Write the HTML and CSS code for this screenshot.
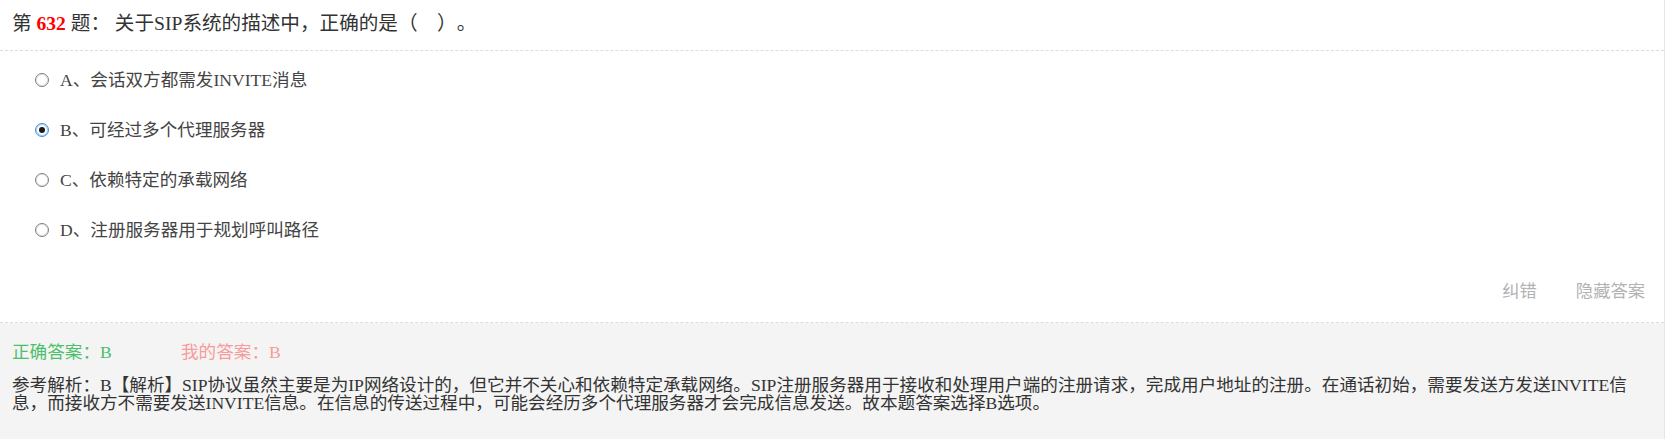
FILE: index.html
```html
<!DOCTYPE html>
<html lang="zh-CN">
<head>
<meta charset="utf-8">
<title>第632题</title>
<link rel="stylesheet" href="styles.css">
</head>
<body>
<div class="wrap">
  <div class="title">第 <span class="num">632</span> 题：&nbsp;关于SIP系统的描述中，正确的是（&nbsp;&nbsp;&nbsp;&nbsp;）。</div>
  <ul class="options">
    <li class="option"><span class="radio"></span><span class="opt-text">A、会话双方都需发INVITE消息</span></li>
    <li class="option"><span class="radio checked"></span><span class="opt-text">B、可经过多个代理服务器</span></li>
    <li class="option"><span class="radio"></span><span class="opt-text">C、依赖特定的承载网络</span></li>
    <li class="option"><span class="radio"></span><span class="opt-text">D、注册服务器用于规划呼叫路径</span></li>
  </ul>
  <div class="actions">
    <span class="action">纠错</span>
    <span class="action">隐藏答案</span>
  </div>
  <div class="answer">
    <div class="answer-row">
      <span class="right-ans">正确答案：B</span>
      <span class="my-ans">我的答案：B</span>
    </div>
    <div class="analysis">参考解析：B【解析】SIP协议虽然主要是为IP网络设计的，但它并不关心和依赖特定承载网络。SIP注册服务器用于接收和处理用户端的注册请求，完成用户地址的注册。在通话初始，需要发送方发送INVITE信息，而接收方不需要发送INVITE信息。在信息的传送过程中，可能会经历多个代理服务器才会完成信息发送。故本题答案选择B选项。</div>
  </div>
</div>
</body>
</html>
```

FILE: styles.css
```css
html, body {
  margin: 0;
  padding: 0;
  background: #ffffff;
}

body {
  font-family: "Liberation Serif", "Noto Sans CJK SC", serif;
  color: #333333;
}

.wrap {
  width: 1664px;
  min-height: 439px;
  border-right: 1px solid #e6e6e6;
  display: flex;
  flex-direction: column;
}

.title {
  height: 50px;
  line-height: 48px;
  padding: 0 12px;
  font-size: 19.6px;
  color: #333333;
  border-bottom: 1px dashed #dcdcdc;
  white-space: nowrap;
  text-spacing-trim: space-all;
}

.num {
  color: #ff0000;
  font-weight: bold;
}

.options {
  list-style: none;
  margin: 0;
  padding: 4px 0 0 35px;
}

.option {
  height: 50px;
  display: flex;
  align-items: center;
  font-size: 17.6px;
  color: #444444;
}

.radio {
  width: 12px;
  height: 12px;
  border: 1px solid #7d7d7d;
  border-radius: 50%;
  background: #ffffff;
  box-shadow: inset 0 0 0 1px #e4e4e4;
  margin-right: 11px;
  display: flex;
  align-items: center;
  justify-content: center;
  flex: none;
}

.radio.checked {
  border-color: #3c8fe0;
  box-shadow: inset 0 0 0 1px #a9cff5;
}

.radio.checked::after {
  content: "";
  width: 6px;
  height: 6px;
  border-radius: 50%;
  background: #1a1a1a;
}

.opt-text {
  line-height: 24px;
}

.actions {
  display: flex;
  justify-content: flex-end;
  gap: 39px;
  padding: 20px 19px 17px 0;
  line-height: 30px;
  font-family: "Noto Sans CJK SC", sans-serif;
  font-size: 17.3px;
  color: #b3b3b3;
  border-bottom: 1px dashed #dcdcdc;
}

.answer {
  flex: 1;
  background: #f4f4f4;
  padding: 18px 0 20px 12px;
}

.answer-row {
  display: flex;
  line-height: 22px;
  font-size: 17.6px;
}

.right-ans {
  color: #4cbf6a;
  width: 169px;
}

.my-ans {
  color: #f79b9b;
}

.analysis {
  margin-top: 13px;
  width: 1636px;
  font-size: 17.6px;
  line-height: 18px;
  color: #333333;
}
```
